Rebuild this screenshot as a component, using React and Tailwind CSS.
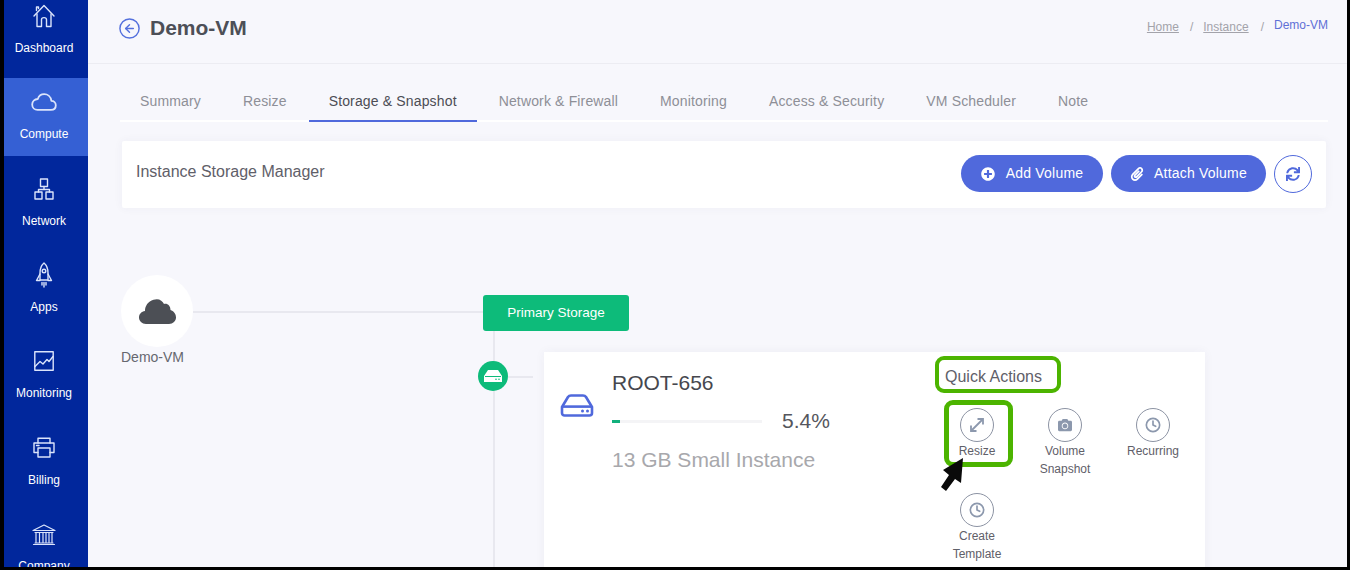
import React from "react";
import { FaPlusCircle, FaPaperclip, FaSync, FaCamera } from "react-icons/fa";
import { CircleArrowLeft, Clock } from "lucide-react";

const S = { fill: "none", stroke: "currentColor", strokeWidth: 1.4, strokeLinejoin: "round", strokeLinecap: "round" };

const HomeI = () => (
  <svg width="22" height="24" viewBox="0 0 22 24" {...S}>
    <path d="M1 12 L11 1.5 L21 12" />
    <path d="M3.5 6.5 L3.5 3 M5.5 4.5V3H3.5" />
    <path d="M4 10V22.5H8.5V15.5C8.5 13 13.5 13 13.5 15.5V22.5H18V10" />
  </svg>
);
const CloudI = () => (
  <svg width="26" height="18" viewBox="0 0 26 18" {...S} strokeWidth="1.8">
    <path d="M6.5 16.8H20C23 16.8 24.8 14.8 24.8 12.2C24.8 9.6 22.8 7.8 20.4 7.8C19.8 3.6 16.6 1.2 13.2 1.2C10.2 1.2 7.8 3 6.8 6C3.6 6.2 1.2 8.4 1.2 11.4C1.2 14.6 3.6 16.8 6.5 16.8Z" />
  </svg>
);
const NetI = () => (
  <svg width="20" height="22" viewBox="0 0 20 22" {...S}>
    <rect x="6.5" y="1" width="7" height="7.5" />
    <rect x="1" y="14" width="7" height="7" />
    <rect x="12" y="14" width="7" height="7" />
    <path d="M10 8.5V11.5M4.5 14V11.5H15.5V14" />
  </svg>
);
const RocketI = () => (
  <svg width="18" height="26" viewBox="0 0 18 26" {...S}>
    <path d="M9 1C5.5 4 5 8 5 11V18H13V11C13 8 12.5 4 9 1Z" />
    <circle cx="9" cy="9" r="1.8" />
    <path d="M5 12L1.5 18.5H5M13 12L16.5 18.5H13" />
    <path d="M7 20.5V23M9 20.5V25M11 20.5V23" />
  </svg>
);
const ChartI = () => (
  <svg width="20" height="20" viewBox="0 0 20 20" {...S}>
    <rect x="0.8" y="0.8" width="18.4" height="18.4" />
    <path d="M1 15.5L6 10.5L9 13L13 8.5L15 10.5L19 5.5" />
  </svg>
);
const PrinterI = () => (
  <svg width="22" height="21" viewBox="0 0 22 21" {...S}>
    <path d="M5 6V1.2H17V6" />
    <path d="M5 15.5H1V6H21V15.5H17" />
    <rect x="5" y="11" width="12" height="9" />
    <path d="M3.5 8.5H6" />
  </svg>
);
const BankI = () => (
  <svg width="24" height="21" viewBox="0 0 24 21" {...S} strokeWidth="1.2">
    <path d="M1 6.5L12 1L23 6.5Z" />
    <path d="M3 8.5H21M3 19H21M1.5 20.5H22.5" />
    <path d="M4 9V18.5M7.5 9V18.5M11 9V18.5M14 9V18.5M17 9V18.5M20 9V18.5" />
  </svg>
);
const DiskI = ({ className }) => (
  <svg className={className} viewBox="0 0 34 23" fill="none" stroke="currentColor" strokeWidth="2.6" strokeLinejoin="round">
    <path d="M2 13L8 3C8.8 1.8 9.6 1.5 11 1.5H23C24.4 1.5 25.2 1.8 26 3L32 13V19C32 20.6 31 21.5 29.4 21.5H4.6C3 21.5 2 20.6 2 19Z" />
    <path d="M2 12.6H32" />
    <circle cx="22.5" cy="17" r="1.5" fill="currentColor" stroke="none" />
    <circle cx="27.5" cy="17" r="1.5" fill="currentColor" stroke="none" />
  </svg>
);
const ResizeI = () => (
  <svg width="16" height="16" viewBox="0 0 16 16" fill="none" stroke="currentColor" strokeWidth="1.8">
    <path d="M2.5 13.5L13.5 2.5" />
    <path d="M8.5 2H14V7.5" />
    <path d="M2 8.5V14H7.5" />
  </svg>
);

const navItems = [
  ["Dashboard", <HomeI />, false],
  ["Compute", <CloudI />, true],
  ["Network", <NetI />, false],
  ["Apps", <RocketI />, false],
  ["Monitoring", <ChartI />, false],
  ["Billing", <PrinterI />, false],
  ["Company", <BankI />, false],
];

const tabs = ["Summary", "Resize", "Storage & Snapshot", "Network & Firewall", "Monitoring", "Access & Security", "VM Scheduler", "Note"];

const Action = ({ icon, label }) => (
  <div className="w-[88px] h-[85px] flex flex-col items-center text-center">
    <div className="w-[34px] h-[34px] rounded-full border border-[#8c93a3] flex items-center justify-center text-[#8c98ad]">{icon}</div>
    <div className="text-[12px] leading-[18px] text-[#5f6069] w-[70px]">{label}</div>
  </div>
);

export default function App() {
  return (
    <div className="w-[1350px] h-[570px] overflow-hidden bg-black pl-[4px] pr-[3px] pb-[3px] font-['Liberation_Sans',Arial,sans-serif]">
      <div className="flex h-full overflow-hidden">
        <aside className="w-[84px] shrink-0 bg-[#01279c] overflow-hidden flex flex-col gap-[8.4px]">
          {navItems.map(([label, icon, active], i) => (
            <div key={label} className={`h-[78px] shrink-0 flex flex-col items-center pr-[4px] text-[12px] text-white ${i === 0 ? "-mt-[8.1px]" : ""} ${active ? "bg-[#3560d4]" : ""}`}>
              <div className="h-[26px] mt-[11px] flex items-center justify-center text-[#dbe4fb]">{icon}</div>
              <div className="mt-[11px] leading-[16px]">{label}</div>
            </div>
          ))}
        </aside>
        <main className="flex-1 bg-[#f7f7fc] overflow-hidden">
          <header className="h-[64px] border-b border-[#ececf2] flex justify-between pl-[30px] pr-[19px]">
            <div className="flex items-center gap-[9px] h-[56px]">
              <CircleArrowLeft size={23} strokeWidth={1.5} className="text-[#5470dd]" />
              <h1 className="text-[21px] font-bold text-[#4d4f57]">Demo-VM</h1>
            </div>
            <div className="flex gap-[10px] text-[12px] text-[#a3a3aa] pt-[17px]">
              <span className="underline mt-[1px]">Home</span>
              <span className="mt-[1px] ml-[1px]">/</span>
              <span className="underline mt-[1px]">Instance</span>
              <span className="mt-[1px] ml-[2px]">/</span>
              <span className="text-[#5f70d6] -mt-[1px]">Demo-VM</span>
            </div>
          </header>

          <nav className="mx-[32px] mt-[17px] h-[41px] border-b-2 border-white flex gap-[2px] w-[1208px]">
            {tabs.map((t) => (
              <div key={t} className={`px-[20px] h-[41px] leading-[40px] text-[14px] tracking-[0.15px] whitespace-nowrap ${t === "Storage & Snapshot" ? "text-[#4c4d55] border-b-2 border-[#5069dc]" : "text-[#8e8f97]"}`}>{t}</div>
            ))}
          </nav>

          <section className="mx-[34px] mt-[19px] w-[1204px] h-[67px] bg-white rounded-[2px] shadow-[0_0_10px_rgba(60,60,100,0.05)] flex justify-between pl-[14px] pr-[14px] pt-[14px]">
            <div className="text-[16px] text-[#5f6069] leading-[34px]">Instance Storage Manager</div>
            <div className="flex gap-[8px] h-[38px]">
              <button className="w-[142px] h-[37px] rounded-full bg-[#5069dc] text-white text-[14px] tracking-[0.2px] flex items-center justify-center gap-[11px]"><FaPlusCircle size={14} />Add Volume</button>
              <button className="w-[155px] h-[37px] rounded-full bg-[#5069dc] text-white text-[14px] tracking-[0.2px] flex items-center justify-center gap-[10px]"><FaPaperclip size={14} />Attach Volume</button>
              <button className="w-[38px] h-[38px] rounded-full border border-[#5069dc] text-[#5069dc] flex items-center justify-center bg-white"><FaSync size={14} /></button>
            </div>
          </section>

          <section className="relative mt-[67px] ml-[33px] flex">
            <div className="w-[72px] shrink-0">
              <div className="w-[72px] h-[72px] rounded-full bg-white flex items-center justify-center text-[#4c4f55]">
                <svg width="37" height="26" viewBox="0 0 37 26" fill="currentColor">
                  <path d="M7 26C3 26 0 23 0 19.5C0 16 2.5 13.5 6 13C6 8 9 3.5 14.5 1.8C19.5 0 23.5 2.5 25 6C28.5 5 31.5 8 31.5 12C34.5 13 37 15.5 37 19.5C37 23 34 26 30 26Z" />
                </svg>
              </div>
              <div className="mt-[2px] text-[14px] leading-[16px] text-[#66676f] whitespace-nowrap">Demo-VM</div>
            </div>
            <div className="w-[290px] h-[2px] mt-[36px] bg-[#e8e8ef] shrink-0"></div>
            <div className="relative">
              <div className="absolute left-[10px] top-[36px] w-[2px] h-[300px] bg-[#e8e8ef]"></div>
              <div className="relative mt-[20px] w-[146px] h-[36px] rounded-[3px] bg-[#0dbb7a] text-white text-[13.5px] flex items-center justify-center">Primary Storage</div>
              <div className="absolute left-[25px] top-[101px] w-[25px] h-[2px] bg-[#e8e8ef]"></div>
              <div className="absolute -left-[5px] top-[86px] w-[30px] h-[30px] rounded-full bg-[#0dbb7a] flex items-center justify-center text-white">
                <svg width="18" height="12" viewBox="0 0 18 12" fill="currentColor"><path d="M4 0H14L18 6V12H0V6Z" /><path d="M1 6.5H17" stroke="#0dbb7a" strokeWidth="1" /><circle cx="12" cy="9.2" r=".8" fill="#0dbb7a" /><circle cx="15" cy="9.2" r=".8" fill="#0dbb7a" /></svg>
              </div>
              <div className="relative ml-[61px] mt-[21px] w-[661px] h-[300px] bg-white shadow-[0_0_10px_rgba(60,60,100,0.05)] flex">
                <div className="w-[68px] shrink-0 pl-[16px] pt-[42px] text-[#5069dc]"><DiskI className="w-[34px] h-[23px]" /></div>
                <div className="w-[333px] shrink-0 pt-[18px]">
                  <div className="text-[21px] leading-[26px] text-[#46474e]">ROOT-656</div>
                  <div className="flex items-center mt-[13px] h-[24px]">
                    <div className="w-[150px] h-[3px] bg-[#f4f4f6]"><div className="w-[8px] h-[3px] bg-[#12b07c]"></div></div>
                    <div className="ml-[20px] text-[21px] text-[#55565d]">5.4%</div>
                  </div>
                  <div className="mt-[14px] text-[21px] leading-[26px] text-[#a8a8ac]">13 GB Small Instance</div>
                </div>
                <div className="pt-[15px]">
                  <div className="text-[16px] leading-[20px] text-[#5f6069]">Quick Actions</div>
                  <div className="-ml-[12px] mt-[21px] w-[264px] flex flex-wrap">
                    <Action icon={<ResizeI />} label="Resize" />
                    <Action icon={<FaCamera size={14} />} label="Volume Snapshot" />
                    <Action icon={<Clock size={16} strokeWidth={2.5} />} label="Recurring" />
                    <Action icon={<Clock size={16} strokeWidth={2.5} />} label="Create Template" />
                  </div>
                </div>
                <div className="absolute left-[391px] top-[4px] w-[126px] h-[37px] border-[4px] border-[#4cb400] rounded-[9px]"></div>
                <div className="absolute left-[400px] top-[48px] w-[69px] h-[67px] border-[5px] border-[#4cb400] rounded-[9px]"></div>
                <svg className="absolute left-[396px] top-[93px]" width="30" height="50" viewBox="0 0 30 50" fill="#0a0a0a">
                  <path d="M23 13L3 25L9 30L1 42L6 46L15 34L21 38Z" />
                </svg>
              </div>
            </div>
          </section>
        </main>
      </div>
    </div>
  );
}
